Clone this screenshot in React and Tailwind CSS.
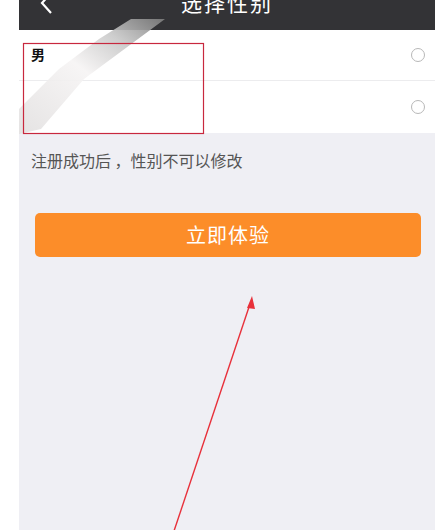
import React from "react";

function Radio() {
  return <span className="block w-[14px] h-[14px] rounded-full border-[1.5px] border-[#b8b8b8] bg-white" />;
}

export default function App() {
  const font = { fontFamily: '"Noto Sans CJK SC", "Noto Sans", sans-serif' };
  return (
    <div className="w-[445px] h-[530px] bg-white overflow-hidden" style={font}>
      <div className="relative ml-[19px] w-[416px] h-[530px] bg-[#efeff4]">
        <div className="h-[30px] bg-[#333336] flex items-end justify-center relative overflow-hidden">
          <svg className="absolute left-[20px] top-[-8px]" width="16" height="22" viewBox="0 0 16 22">
            <path d="M12 1 L3 11 L12 21" stroke="#fff" strokeWidth="2.2" fill="none" />
          </svg>
          <span className="text-white text-[21px] leading-none mb-[17px] tracking-[2px]">选择性别</span>
        </div>

        <div className="bg-white">
          <div className="h-[51px] flex items-center justify-between pl-[12px] pr-[10px] border-b border-[#ececee]">
            <span className="text-[14px] font-bold text-[#111] -mt-[2px]">男</span>
            <Radio />
          </div>
          <div className="h-[52px] flex items-center justify-between pl-[12px] pr-[10px]">
            <span className="text-[14px] font-bold text-[#111]"></span>
            <Radio />
          </div>
        </div>

        <div className="pl-[12px] pt-[15px] text-[16px] text-[#555] leading-[24px]">注册成功后 ，性别不可以修改</div>

        <div className="px-[16px] pt-[41px]">
          <button className="w-[386px] h-[44px] rounded-[5px] bg-[#fc8d29] text-white text-[20px] tracking-[1px]">立即体验</button>
        </div>

        {/* blurred streak */}
        <svg className="absolute left-0 top-[19px]" width="170" height="115" viewBox="0 0 170 115">
          <defs>
            <linearGradient id="g" x1="1" y1="0" x2="0" y2="1">
              <stop offset="0" stopColor="#7d7d7d" />
              <stop offset="0.25" stopColor="#c8c8c8" />
              <stop offset="0.5" stopColor="#f6f4f4" />
              <stop offset="1" stopColor="#e2e0e0" />
            </linearGradient>
          </defs>
          <polygon points="112,0 146,0 65,60 22,110 0,115 0,90 40,50 80,20" fill="url(#g)" opacity="0.9" />
        </svg>
      </div>

      {/* annotations */}
      <svg className="absolute left-0 top-0 pointer-events-none" width="445" height="530" viewBox="0 0 445 530">
        <rect x="23.5" y="43.5" width="180" height="90" fill="none" stroke="#c8283e" strokeWidth="1.2" />
        <line x1="174" y1="531" x2="250" y2="304" stroke="#e8303a" strokeWidth="1.4" />
        <polygon points="252,296 247,308 255,309" fill="#e8303a" />
      </svg>
    </div>
  );
}
